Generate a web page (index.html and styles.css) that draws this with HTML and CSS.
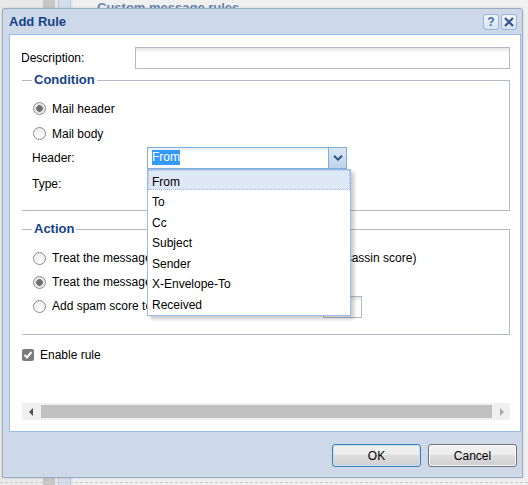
FILE: index.html
```html
<!DOCTYPE html>
<html>
<head>
<meta charset="utf-8">
<title>Add Rule</title>
<link rel="stylesheet" href="styles.css">
</head>
<body>
<div class="desktop">
  <div class="bg-strip gray"></div>
  <div class="bg-strip blue"></div>
  <div class="bg-panel"></div>
  <div class="bg-legend">Custom message rules</div>
  <div class="bg-dash"></div>

  <div class="window">
    <div class="win-header">
      <span class="win-title">Add Rule</span>
      <div class="tools">
        <span class="tool tool-help">?</span>
        <span class="tool tool-close">
          <svg width="12" height="12" viewBox="0 0 12 12"><path d="M2 2 L10 10 M10 2 L2 10" stroke="#34558f" stroke-width="2.2" fill="none"/></svg>
        </span>
      </div>
    </div>

    <div class="win-body">
      <div class="scroll">
        <div class="content">
          <div class="desc-row">
            <span class="desc-lbl">Description:</span>
            <div class="textfield desc-field"></div>
          </div>

          <fieldset class="fs fs-cond">
            <legend>Condition</legend>
            <div class="radio-row"><span class="radio checked"></span><span class="rtext">Mail header</span></div>
            <div class="radio-row"><span class="radio"></span><span class="rtext">Mail body</span></div>
            <div class="field-row header-row">
              <span class="flbl">Header:</span>
              <div class="combo">
                <div class="combo-input"><span class="sel">From</span></div>
                <div class="combo-trigger">
                  <svg width="10" height="6" viewBox="0 0 10 6"><path d="M1 0.8 L5 4.6 L9 0.8" stroke="#2d4f8a" stroke-width="2" fill="none"/></svg>
                </div>
                <ul class="combo-list">
                  <li class="item selected">From</li>
                  <li class="item">To</li>
                  <li class="item">Cc</li>
                  <li class="item">Subject</li>
                  <li class="item">Sender</li>
                  <li class="item">X-Envelope-To</li>
                  <li class="item">Received</li>
                </ul>
              </div>
            </div>
            <div class="field-row type-row">
              <span class="flbl">Type:</span>
            </div>
          </fieldset>

          <fieldset class="fs fs-action">
            <legend>Action</legend>
            <div class="radio-row"><span class="radio"></span><span class="rtext">Treat the message as spam (regardless of the SpamAssassin score)</span></div>
            <div class="radio-row"><span class="radio checked"></span><span class="rtext">Treat the message as not spam</span></div>
            <div class="radio-row"><span class="radio"></span><span class="rtext score-text">Add spam score to the message</span><div class="textfield num-field"></div></div>
          </fieldset>

          <div class="check-row"><span class="checkbox"><svg width="10" height="10" viewBox="0 0 10 10"><path d="M1.5 5 L4 7.5 L8.5 2" stroke="#fff" stroke-width="2" fill="none"/></svg></span><span class="rtext">Enable rule</span></div>
        </div>
      </div>
      <div class="hscroll">
        <span class="arrow-left"></span>
        <span class="thumb"></span>
        <span class="arrow-right"></span>
      </div>
    </div>

    <div class="win-footer">
      <button class="btn btn-ok">OK</button>
      <button class="btn">Cancel</button>
    </div>
  </div>
</div>
</body>
</html>
```

FILE: styles.css
```css
* { box-sizing: border-box; }
html, body { margin: 0; padding: 0; }
body {
  width: 528px;
  height: 485px;
  overflow: hidden;
  background: #e9e9e9;
  font-family: "Liberation Sans", Arial, sans-serif;
  font-size: 12px;
  color: #000;
}
.desktop { position: relative; width: 528px; height: 485px; }

/* background application (behind the dialog) */
.bg-strip { position: absolute; top: 0; bottom: 0; }
.bg-strip.gray { left: 43px; width: 12px; background: #c6c6c6; }
.bg-strip.blue { left: 58px; width: 13px; background: #d4dfee; border-left: 1px solid #b9c9de; border-right: 1px solid #b9c9de; }
.bg-panel { position: absolute; left: 73px; top: 0; right: 0; bottom: 0; background: #f0f0f0; }
.bg-legend {
  position: absolute; left: 82px; top: 0px;
  display: flex; align-items: center; gap: 3px;
  color: #6a86b0; font-weight: bold; font-size: 13px; line-height: 16px;
}
.bg-legend::before { content: ""; width: 12px; height: 1px; background: #b5b8c8; }
.bg-dash { position: absolute; left: 0; right: 0; top: 482px; border-top: 1px dashed #cdcdcd; }

/* window */
.window {
  position: absolute; left: 2px; top: 8px;
  width: 521px; height: 470px;
  border: 1px solid #98a9c3;
  border-radius: 3px 3px 0 0;
  background: #cdd9e8;
  display: flex; flex-direction: column;
  box-shadow: 0 0 3px rgba(0,0,0,0.12);
}
.win-header {
  height: 25px; flex: 0 0 25px;
  display: flex; align-items: center; justify-content: space-between;
  padding: 0 5px 0 6px;
}
.win-title { font-weight: bold; font-size: 13px; color: #15428b; }
.tools { display: flex; gap: 2px; }
.tool {
  width: 16px; height: 16px;
  border: 1px solid #9bb5d9; border-radius: 3px;
  background: linear-gradient(#f3f7fc, #d5e2f2);
  display: flex; align-items: center; justify-content: center;
}
.tool-help { color: #3f6ba8; font-weight: bold; font-size: 12px; line-height: 14px; }

.win-body {
  flex: 1;
  margin: 0 1px 0 6px;
  border: 1px solid #99bbe8;
  background: #fff;
  padding: 12px 10px 11px 12px;
  display: flex; flex-direction: column;
}
.scroll { flex: 1; overflow: hidden; }
.content { margin-left: -3px; width: 491px; }

.desc-row { display: flex; height: 22px; align-items: center; }
.desc-lbl { width: 116px; padding-left: 2px; }
.textfield {
  height: 22px;
  border: 1px solid #b5b8c8;
  background: linear-gradient(#e6e6e6 0, #fff 5px);
}
.desc-field { flex: 1; }

.fs {
  margin: 3px 0 0;
  padding: 8px 12px 14px 12px;
  border: 1px solid #b5b8c8;
  min-width: 0;
}
.fs legend {
  padding: 0 2px;
  font-weight: bold; font-size: 13px; line-height: 16px;
  color: #15428b;
}
.fs-action { margin-top: 10px; padding-top: 9px; padding-bottom: 16px; }
.fs-action .radio-row { height: 24px; }

.radio-row { height: 25px; display: flex; align-items: center; white-space: nowrap; }
.radio {
  flex: 0 0 13px; width: 13px; height: 13px; margin-left: 1px; margin-right: 6px;
  border: 1px solid #8a8a8a; border-radius: 50%;
  background: linear-gradient(#ececec, #fff);
}
.radio.checked {
  border-color: #8f8f8f;
  background: radial-gradient(circle, #6a6a6a 0, #727272 3px, #e2e2e2 3.6px, #f3f3f3 100%);
}
.rtext { white-space: nowrap; }
.score-text { width: 271px; flex: 0 0 271px; overflow: hidden; }
.num-field { width: 39px; height: 22px; margin-top: 1px; }

.field-row { display: flex; align-items: center; }
.flbl { width: 115px; flex: 0 0 115px; }
.header-row { height: 22px; margin-top: 1px; }
.type-row { height: 24px; margin-top: 3px; }

.combo { position: relative; display: flex; height: 22px; width: 200px; }
.combo-input {
  width: 182px; height: 22px;
  border: 1px solid #7eadd9;
  background: linear-gradient(#e8eef6 0, #fff 5px);
  padding: 2px 0 0 4px;
}
.sel {
  display: inline-block;
  background: #3399ff; color: #fff;
  line-height: 15px; height: 15px;
}
.combo-trigger {
  width: 18px; height: 22px;
  border: 1px solid #7eadd9; border-left: 0;
  background: linear-gradient(#dbe6f4, #bfd3ec);
  display: flex; align-items: center; justify-content: center;
}
.combo-list {
  position: absolute; left: 0; top: 22px;
  width: 204px; height: 147px;
  margin: 0; padding: 0; list-style: none;
  border: 1px solid #99bbe8;
  background: #fff;
  box-shadow: 3px 3px 4px rgba(0,0,0,0.22);
  z-index: 5;
}
.item {
  height: 20.45px; line-height: 16.45px;
  padding: 3px 0 0 3px;
  border: 1px solid transparent;
}
.item.selected { background: #dfe8f6; border: 1px dotted #a3bae9; }

.check-row { display: flex; align-items: center; height: 24px; margin-top: 8px; padding-left: 3px; }
.checkbox {
  width: 12px; height: 12px; margin-right: 6px;
  background: #7b7b7b; border-radius: 2px;
  display: flex; align-items: center; justify-content: center;
}

.hscroll {
  height: 17px; flex: 0 0 17px;
  background: #f0f0f0;
  display: flex; align-items: center;
  position: relative;
}
.arrow-left {
  width: 0; height: 0; margin-left: 7px;
  border-top: 4px solid transparent; border-bottom: 4px solid transparent;
  border-right: 4px solid #505050;
}
.thumb { height: 13px; margin-left: 8px; width: 451px; background: #c1c1c1; }
.arrow-right {
  width: 0; height: 0; margin-left: 8px;
  border-top: 4px solid transparent; border-bottom: 4px solid transparent;
  border-left: 4px solid #a8a8a8;
}

.win-footer {
  height: 45px; flex: 0 0 45px;
  display: flex; justify-content: flex-end; align-items: flex-start;
  gap: 7px;
  padding: 12px 5px 0 0;
}
.btn {
  width: 89px; height: 23px;
  border: 1px solid #707070; border-radius: 3px;
  background: linear-gradient(#f2f2f2 0, #ebebeb 45%, #dddddd 50%, #cfcfcf 100%);
  box-shadow: inset 0 0 0 1px #fcfcfc;
  font-family: "Liberation Sans", Arial, sans-serif;
  font-size: 12px; color: #000;
  padding: 0;
}
.btn-ok { border-color: #3c7fb1; box-shadow: inset 0 0 0 1px #bfe3f7; }
```
